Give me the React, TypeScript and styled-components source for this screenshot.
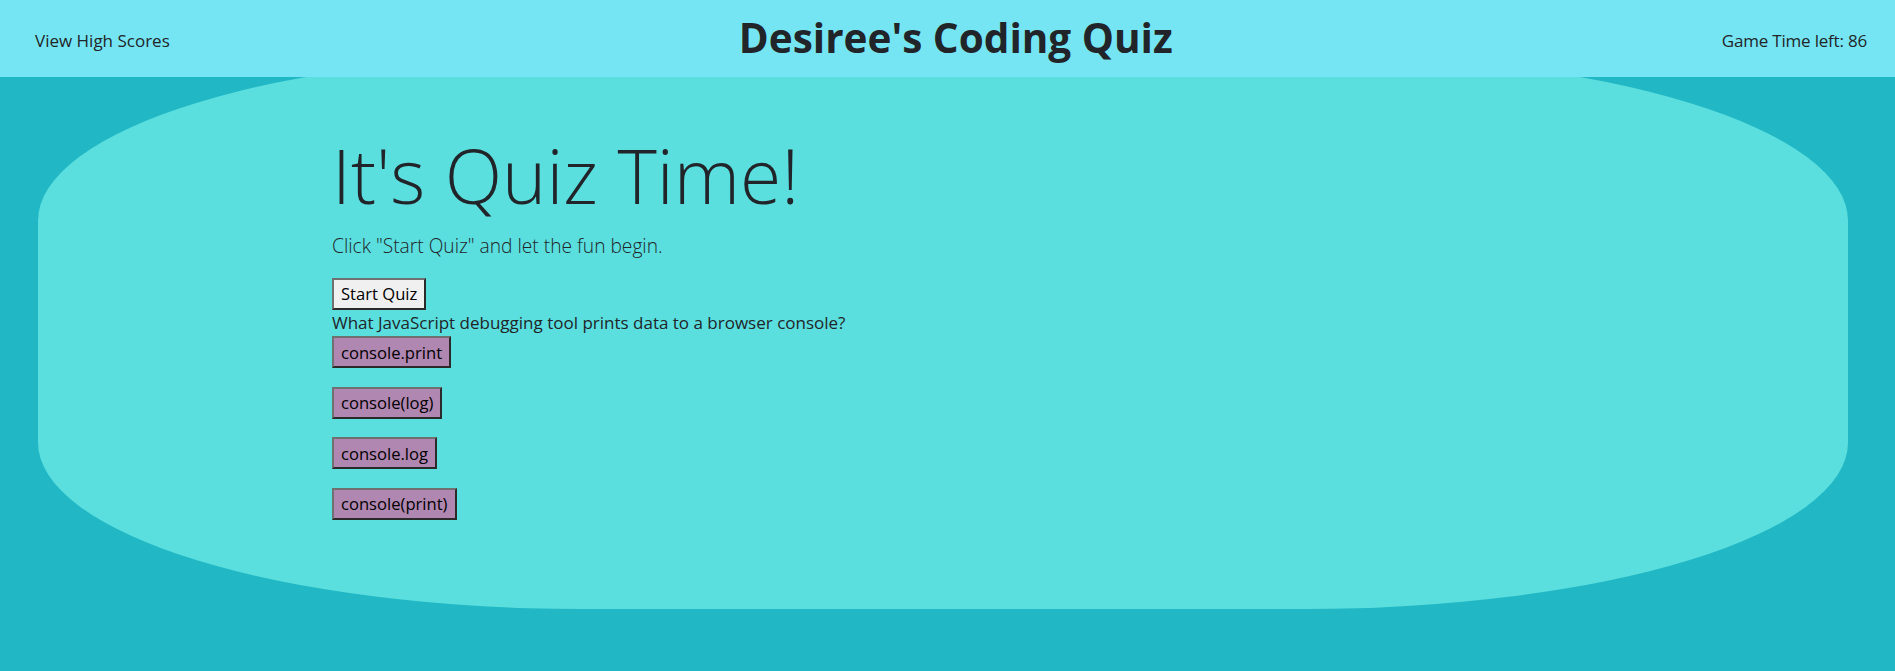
import React from "react";
import styled, { createGlobalStyle } from "styled-components";

const Global = createGlobalStyle`
  html, body {
    margin: 0;
    padding: 0;
    background: #21b7c4;
    color: #212529;
    font-family: "Open Sans", "Noto Sans", "Liberation Sans", sans-serif;
  }
  #root { display: flow-root; min-height: 671px; }
`;

const Header = styled.header`
  position: fixed;
  top: 0;
  left: 0;
  right: 0;
  z-index: 10;
  height: 77px;
  box-sizing: border-box;
  padding: 0 28px 0 35px;
  background: #76e5f3;
  display: flex;
  align-items: center;
  justify-content: space-between;
`;

const NavText = styled.span`
  font-size: 17px;
  font-weight: 400;
  color: #212529;
  padding-top: 4px;
`;

const Timer = styled(NavText)`
  letter-spacing: -0.2px;
`;

const Title = styled.h1`
  margin: 0 0 0 20px;
  font-size: 40.5px;
  font-weight: 700;
  line-height: 1.2;
  color: #212529;
`;

const Jumbotron = styled.main`
  box-sizing: border-box;
  height: 555px;
  margin: 54px 47px 0 38px;
  padding: 76px 0 0 294px;
  background: #5adede;
  border-radius: 30%;
  display: flex;
  flex-direction: column;
  align-items: flex-start;
`;

const Display = styled.h2`
  margin: 0 0 12px;
  font-size: 75px;
  font-weight: 300;
  line-height: 1.2;
`;

const Lead = styled.p`
  margin: 0 0 17px;
  font-size: 19.2px;
  font-weight: 300;
  line-height: 1.5;
`;

const Button = styled.button<{ $variant?: "start" | "answer" }>`
  box-sizing: border-box;
  height: 32px;
  padding: 0 7px;
  margin: 0;
  font-family: inherit;
  font-size: 16.6px;
  color: #000;
  background: ${(p) => (p.$variant === "answer" ? "#b087b0" : "#f0f0f0")};
  border: 2px solid;
  border-color: #707070 #2a2a2a #2a2a2a #707070;
  cursor: pointer;
`;

const Question = styled.div`
  font-size: 17px;
  line-height: 1.5;
`;

const Answers = styled.div`
  margin-top: 1px;
  display: flex;
  flex-direction: column;
  align-items: flex-start;
  gap: 18.5px;
`;

const answers = ["console.print", "console(log)", "console.log", "console(print)"];

export default function App() {
  return (
    <>
      <Global />
      <Header>
        <NavText>View High Scores</NavText>
        <Title>Desiree's Coding Quiz</Title>
        <Timer>Game Time left: 86</Timer>
      </Header>
      <Jumbotron>
        <Display>It's Quiz Time!</Display>
        <Lead>Click "Start Quiz" and let the fun begin.</Lead>
        <Button $variant="start">Start Quiz</Button>
        <Question>What JavaScript debugging tool prints data to a browser console?</Question>
        <Answers>
          {answers.map((a) => (
            <Button key={a} $variant="answer">
              {a}
            </Button>
          ))}
        </Answers>
      </Jumbotron>
    </>
  );
}
